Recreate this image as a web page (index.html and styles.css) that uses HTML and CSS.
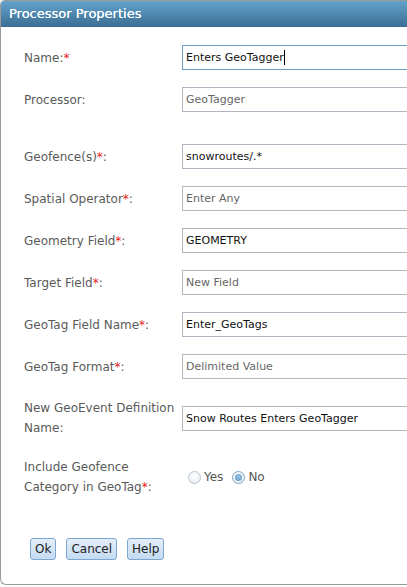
FILE: index.html
```html
<!DOCTYPE html>
<html>
<head>
<meta charset="utf-8">
<link rel="stylesheet" href="styles.css">
</head>
<body>
<div class="dialog">
  <div class="title">Processor Properties</div>
  <div class="form">
    <div class="row">
      <div class="label">Name:<span class="req">*</span></div>
      <div class="input focus">Enters GeoTagger<span class="caret"></span></div>
    </div>
    <div class="row">
      <div class="label">Processor:</div>
      <div class="input ro">GeoTagger</div>
    </div>
    <div class="row sep">
      <div class="label">Geofence(s)<span class="req">*</span>:</div>
      <div class="input">snowroutes/.*</div>
    </div>
    <div class="row">
      <div class="label">Spatial Operator<span class="req">*</span>:</div>
      <div class="input ro">Enter Any</div>
    </div>
    <div class="row">
      <div class="label">Geometry Field<span class="req">*</span>:</div>
      <div class="input">GEOMETRY</div>
    </div>
    <div class="row">
      <div class="label">Target Field<span class="req">*</span>:</div>
      <div class="input ro">New Field</div>
    </div>
    <div class="row">
      <div class="label">GeoTag Field Name<span class="req">*</span>:</div>
      <div class="input">Enter_GeoTags</div>
    </div>
    <div class="row">
      <div class="label">GeoTag Format<span class="req">*</span>:</div>
      <div class="input ro">Delimited Value</div>
    </div>
    <div class="row two">
      <div class="label">New GeoEvent Definition Name:</div>
      <div class="input">Snow Routes Enters GeoTagger</div>
    </div>
    <div class="row two">
      <div class="label">Include Geofence Category in GeoTag<span class="req">*</span>:</div>
      <div class="radios">
        <span class="radio"></span><span class="rlabel">Yes</span>
        <span class="radio on"></span><span class="rlabel">No</span>
      </div>
    </div>
  </div>
  <div class="buttons">
    <button class="btn">Ok</button>
    <button class="btn">Cancel</button>
    <button class="btn">Help</button>
  </div>
</div>
</body>
</html>
```
FILE: styles.css
```css
html, body {
  margin: 0;
  padding: 0;
  background: #fff;
}
body {
  width: 407px;
  height: 587px;
  font-family: "DejaVu Sans", Verdana, sans-serif;
}
.dialog {
  width: 407px;
  height: 585px;
  border: 1px solid #9a9a9a;
  border-right: none;
  border-radius: 5px 0 0 6px;
  background: #fff;
  box-sizing: border-box;
  overflow: hidden;
}
.title {
  height: 26px;
  line-height: 26px;
  padding-left: 8px;
  font-size: 13px;
  color: #fff;
  text-shadow: 0 0 0.4px #fff;
  background: linear-gradient(#62a3cb, #3c6d94);
}
.form {
  display: flex;
  flex-direction: column;
  gap: 17px;
  padding: 18px 0 0 23px;
}
.row {
  display: flex;
  align-items: center;
}
.row.sep {
  margin-top: 15px;
}
.row.two {
  margin-top: 2px;
}
.label {
  width: 158px;
  flex: none;
  font-size: 12px;
  line-height: 20px;
  color: #5a5a5a;
  padding-right: 2px;
  box-sizing: border-box;
}
.req {
  color: #e62020;
}
.input {
  flex: 1;
  min-width: 0;
  height: 25px;
  box-sizing: border-box;
  border: 1px solid #b3b6c0;
  border-right: none;
  padding: 0 3px;
  font-size: 11px;
  line-height: 23px;
  color: #111;
  white-space: nowrap;
  overflow: hidden;
}
.input.focus {
  border-color: #6c9ec8;
}
.input.ro {
  color: #666;
}
.caret {
  display: inline-block;
  width: 1px;
  height: 15px;
  background: #000;
  vertical-align: -4px;
}
.radios {
  display: flex;
  align-items: center;
  padding-left: 6px;
  font-size: 12px;
  color: #555;
}
.radio {
  width: 11px;
  height: 11px;
  border: 1px solid #b8c4cf;
  border-radius: 50%;
  background: radial-gradient(circle at 50% 40%, #fff, #e4e8ec);
  margin-right: 3px;
  box-sizing: content-box;
  position: relative;
}
.radio.on {
  border-color: #7ea6c9;
  margin-left: 9px;
}
.radio.on::after {
  content: "";
  position: absolute;
  left: 2px;
  top: 2px;
  width: 7px;
  height: 7px;
  border-radius: 50%;
  background: radial-gradient(circle at 50% 40%, #9cc4e6, #5d93c6);
}
.buttons {
  display: flex;
  gap: 10px;
  padding: 41px 0 0 29px;
}
.btn {
  font-family: "DejaVu Sans", Verdana, sans-serif;
  font-size: 12px;
  color: #222;
  height: 22px;
  padding: 0 4px;
  border: 1px solid #7ea7cf;
  border-radius: 3px;
  background: linear-gradient(#e3eef9, #c4dbf2);
}
```
